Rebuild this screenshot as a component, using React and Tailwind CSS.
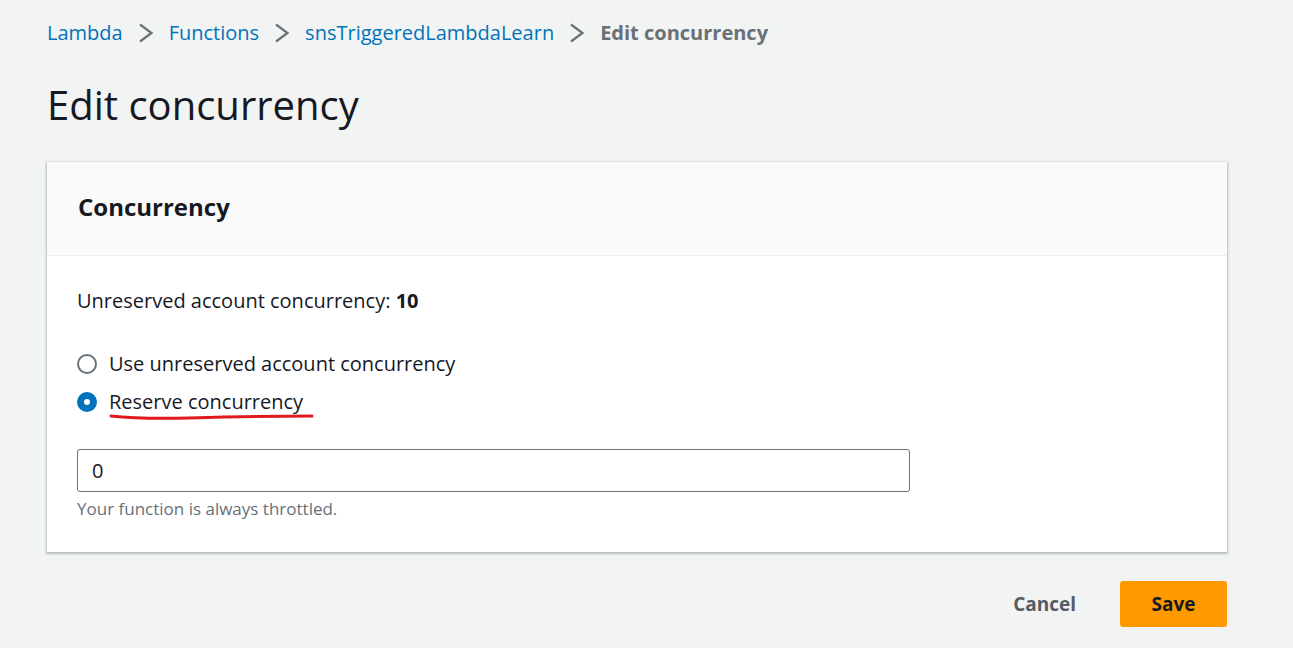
function Chevron() {
    return (
        <svg width="16" height="20" viewBox="0 0 16 20" className="mx-[15px] text-[#687078]">
            <path d="M2 1.5 L13.5 10 L2 18.5" fill="none" stroke="currentColor" strokeWidth="2.2" />
        </svg>
    )
}

function App() {
    const crumbs = ['Lambda', 'Functions', 'snsTriggeredLambdaLearn']

    return (
        <div className="min-h-screen bg-[#f2f3f3] pl-[47px] pr-[66px] pt-[19px] font-['Open_Sans',sans-serif] text-[#16191f]">
            <nav className="flex items-center text-[20px] leading-[28px]">
                {crumbs.map((c) => (
                    <span key={c} className="flex items-center">
                        <a className="text-[#0073bb]">{c}</a>
                        <Chevron />
                    </span>
                ))}
                <span className="font-bold text-[#687078]">Edit concurrency</span>
            </nav>

            <h1 className="mt-[34px] text-[40px] leading-[48px] text-[#16191f]">Edit concurrency</h1>

            <div className="mt-[33px] bg-white shadow-[0_1px_2px_1px_rgba(0,28,36,0.25)]">
                <div className="h-[94px] flex items-center pb-[3px] px-[31px] bg-[#fafafa] border-b border-[#eaeded]">
                    <h2 className="text-[24px] font-bold">Concurrency</h2>
                </div>
                <div className="px-[30px] pt-[31px] pb-[31px]">
                    <p className="text-[20px] leading-[28px]">
                        Unreserved account concurrency: <span className="font-bold">10</span>
                    </p>

                    <div className="mt-[35px] flex flex-col gap-[10px]">
                        <label className="flex items-center gap-[12px] text-[20px] leading-[28px]">
                            <span className="w-[20px] h-[20px] rounded-full border-2 border-[#687078] bg-white" />
                            Use unreserved account concurrency
                        </label>
                        <label className="flex items-center gap-[12px] text-[20px] leading-[28px]">
                            <span className="w-[20px] h-[20px] rounded-full border-[7px] border-[#0073bb] bg-white" />
                            <span className="relative">
                                Reserve concurrency
                                <svg className="absolute left-0 top-[24px]" width="206" height="10" viewBox="0 0 206 10">
                                    <path d="M2 4 C 20 6, 40 7, 80 6 S 170 4, 203 4" fill="none" stroke="#e0191f" strokeWidth="3" strokeLinecap="round" />
                                </svg>
                            </span>
                        </label>
                    </div>

                    <div className="mt-[33px] w-[833px] h-[43px] border border-[#687078] rounded-[3px] flex items-center px-[14px] text-[20px]">
                        0
                    </div>
                    <p className="mt-[5px] text-[17px] leading-[24px] text-[#687078]">Your function is always throttled.</p>
                </div>
            </div>

            <div className="mt-[29px] flex items-center justify-end gap-[44px]">
                <button className="text-[19px] font-bold text-[#545b64]">Cancel</button>
                <button className="w-[107px] h-[46px] rounded-[3px] bg-[#ff9900] text-[19px] font-bold text-[#16191f]">Save</button>
            </div>
        </div>
    )
}

export default App
